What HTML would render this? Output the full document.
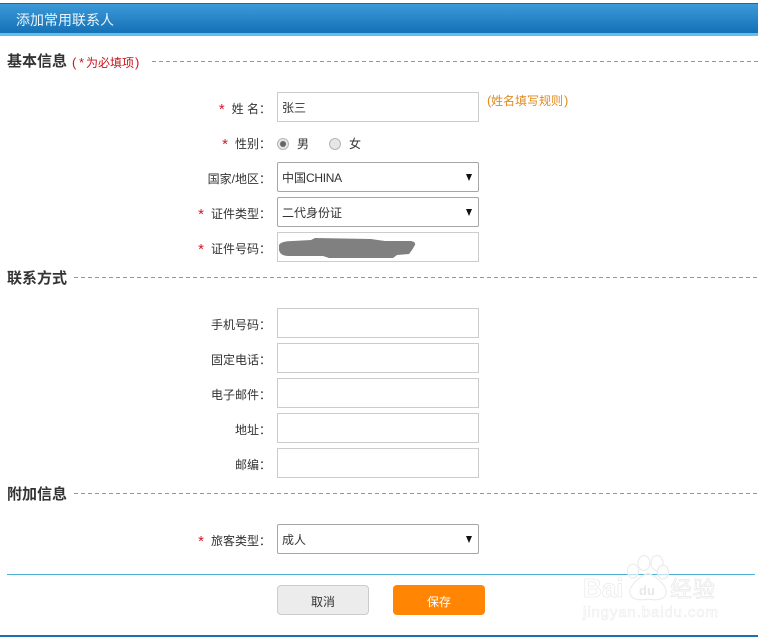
<!DOCTYPE html>
<html lang="zh"><head><meta charset="utf-8"><title>添加常用联系人</title>
<style>
html,body{margin:0;padding:0;background:#fff}
body{width:758px;height:637px;position:relative;overflow:hidden;font-family:"Liberation Sans","WenQuanYi Zen Hei","Noto Sans CJK SC",sans-serif;font-size:12px;color:#333}
.a{position:absolute;white-space:nowrap}
.box{position:absolute;left:277px;width:200px;height:28px;border:1px solid #ccc;background:#fff}
.sel{position:absolute;left:277px;width:200px;height:28px;border:1px solid #a6a6a6;border-radius:2px;background:#fff;line-height:31px;text-indent:4px;color:#333}
.sel:after{content:"";position:absolute;right:6px;top:11px;border-left:3.5px solid transparent;border-right:3.5px solid transparent;border-top:7px solid #111}
.lb{position:absolute;right:487px;margin-top:1px;white-space:nowrap;line-height:16px;text-align:right}
.r{color:#d8152b;margin-right:7px;font-size:15px;line-height:12px;position:relative;top:1px}
.h{position:absolute;left:7px;font-size:15px;font-weight:bold;line-height:18px;color:#333;white-space:nowrap}
.d{position:absolute;right:0;height:1px;background:repeating-linear-gradient(90deg,#999 0,#999 4px,transparent 4px,transparent 7px)}
.rad{position:absolute;width:10px;height:10px;border:1px solid #b5b5b5;border-radius:50%;background:#e6e6e6}
</style></head><body>
<div class="a" style="left:0;top:3px;width:758px;height:1px;background:#1d6b8f"></div>
<div class="a" style="left:0;top:4px;width:758px;height:29px;background:linear-gradient(#3c9ad8,#1570b6)"></div>
<div class="a" style="left:0;top:33px;width:758px;height:3px;background:#5fc0ea"></div>
<div class="a" style="left:16px;top:11px;font-size:14px;line-height:18px;color:#e8f4fb">添加常用联系人</div>

<div class="h" style="top:53px">基本信息</div>
<div class="a" style="left:72px;top:55px;line-height:16px;color:#c5161d;font-size:13px">(</div>
<div class="a" style="left:79px;top:55px;line-height:16px;color:#c5161d;font-size:13px">*</div>
<div class="a" style="left:86px;top:55px;line-height:16px;color:#c5161d">为必填项</div>
<div class="a" style="left:135px;top:55px;line-height:16px;color:#c5161d;font-size:13px">)</div>
<div class="d" style="left:152px;top:61px"></div>

<div class="lb" style="top:100px"><span class="r">*</span>姓 名：</div>
<div class="box" style="top:92px;line-height:31px;text-indent:4px">张三</div>
<div class="a" style="left:487px;top:93px;line-height:16px;color:#e08a1e;font-size:13px">(</div>
<div class="a" style="left:491px;top:93px;line-height:16px;color:#e08a1e">姓名填写规则</div>
<div class="a" style="left:564px;top:93px;line-height:16px;color:#e08a1e;font-size:13px">)</div>

<div class="lb" style="top:135px"><span class="r">*</span>性别：</div>
<div class="rad" style="left:277px;top:138px"></div>
<div class="a" style="left:280px;top:141px;width:6px;height:6px;border-radius:50%;background:#666"></div>
<div class="a" style="left:297px;top:136px;line-height:16px">男</div>
<div class="rad" style="left:329px;top:138px"></div>
<div class="a" style="left:349px;top:136px;line-height:16px">女</div>

<div class="lb" style="top:170px">国家/地区：</div>
<div class="sel" style="top:162px">中国<span style="letter-spacing:-.3px">CHINA</span></div>
<div class="lb" style="top:205px"><span class="r">*</span>证件类型：</div>
<div class="sel" style="top:197px">二代身份证</div>
<div class="lb" style="top:240px"><span class="r">*</span>证件号码：</div>
<div class="box" style="top:232px"></div>
<svg class="a" style="left:277px;top:236px" width="142" height="24"><path d="M2 9 Q4 5 16 5 L34 4 L38 2 L94 3 L108 5 L134 5 Q139 6 138 9 L135 14 L132 18 L120 19 L116 22 L52 22 L46 20 L12 20 Q3 20 2 14Z" fill="#808080"/></svg>

<div class="h" style="top:270px">联系方式</div>
<div class="d" style="left:74px;top:277px"></div>

<div class="lb" style="top:316px">手机号码：</div><div class="box" style="top:308px"></div>
<div class="lb" style="top:351px">固定电话：</div><div class="box" style="top:343px"></div>
<div class="lb" style="top:386px">电子邮件：</div><div class="box" style="top:378px"></div>
<div class="lb" style="top:421px">地址：</div><div class="box" style="top:413px"></div>
<div class="lb" style="top:456px">邮编：</div><div class="box" style="top:448px"></div>

<div class="h" style="top:486px">附加信息</div>
<div class="d" style="left:74px;top:493px"></div>

<div class="lb" style="top:532px"><span class="r">*</span>旅客类型：</div>
<div class="sel" style="top:524px">成人</div>

<div class="a" style="left:7px;top:574px;width:748px;height:1px;background:#4fb0d3"></div>
<div class="a" style="left:277px;top:585px;width:90px;height:28px;border:1px solid #ccc;border-radius:4px;background:#ececec;text-align:center;line-height:32px;color:#333">取消</div>
<div class="a" style="left:393px;top:585px;width:92px;height:30px;border-radius:4px;background:#ff8503;text-align:center;line-height:34px;color:#fff">保存</div>
<div class="a" style="left:0;top:635px;width:758px;height:2px;background:#1c70ab"></div>

<svg class="a" style="left:580px;top:552px" width="145" height="72">
<g fill="#fff" fill-opacity=".6" stroke="#ececec" stroke-width="1.2">
<ellipse cx="64" cy="11" rx="6" ry="7.5"/><ellipse cx="77" cy="11" rx="6" ry="7.5"/><ellipse cx="53" cy="19" rx="5.5" ry="7"/><ellipse cx="83" cy="20" rx="5.5" ry="7"/>
<path d="M68 21 Q75 24 82 31 Q90 40 83 46 Q77 49 68 47 Q59 49 53 46 Q46 40 54 31 Q61 24 68 21Z"/>
</g>
<text x="3" y="45" font-family="Liberation Sans,sans-serif" font-size="26" font-weight="bold" fill="#fff" stroke="#ececec" stroke-width=".8">Bai</text>
<text x="59" y="43" font-family="Liberation Sans,sans-serif" font-size="13" font-weight="bold" fill="#e8e8e8">du</text>
<text x="90" y="45" font-family="Noto Sans CJK SC,sans-serif" font-size="22" fill="#fff" stroke="#e8e8e8" stroke-width=".7" textLength="45">经验</text>
<text x="3" y="65" font-family="Liberation Sans,sans-serif" font-size="15" fill="#fff" stroke="#ececec" stroke-width=".6" textLength="135">jingyan.baidu.com</text>
</svg>
</body></html>
